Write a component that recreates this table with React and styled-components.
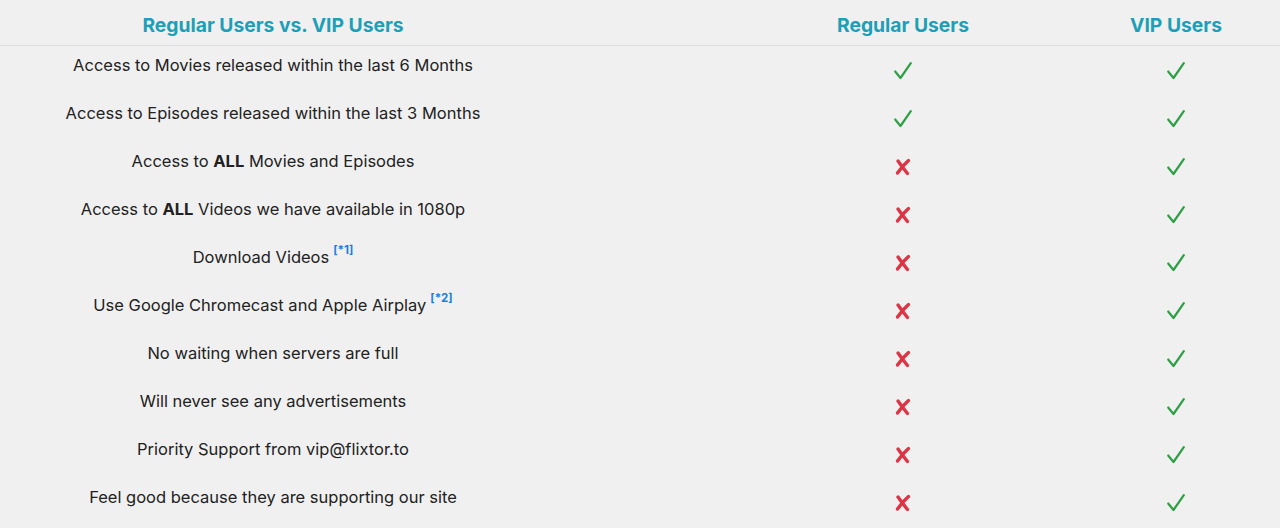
import React from "react";
import styled, { createGlobalStyle } from "styled-components";

const GlobalStyle = createGlobalStyle`
  html, body {
    margin: 0;
    padding: 0;
    background: #f0f0f0;
  }
  body {
    font-family: Inter, "Noto Sans", "Liberation Sans", sans-serif;
    color: #222;
  }
`;

const Table = styled.div`
  width: 1280px;
  height: 528px;
  background: #f0f0f0;
  overflow: hidden;
`;

const Row = styled.div`
  display: grid;
  grid-template-columns: 546px 1fr 208px;
  height: ${(p) => (p.$head ? "45px" : "48px")};
  align-items: start;
  border-bottom: ${(p) => (p.$head ? "1px solid #dddddd" : "none")};
`;

const Cell = styled.div`
  text-align: center;
  padding-left: ${(p) => (p.$mid ? "188px" : "0")};
  padding-top: ${(p) => (p.$head ? "13px" : p.$icon ? "16px" : "9px")};
  font-size: 16.5px;
  line-height: 20px;
  display: flex;
  justify-content: center;
`;

const HeadText = styled.span`
  color: #1c9fb7;
  font-size: 19.3px;
  line-height: 24px;
  font-weight: 700;
`;

const Note = styled.sup`
  color: #1a7fe0;
  font-size: 11.5px;
  font-weight: 700;
  line-height: 0;
  margin-left: 4px;
  vertical-align: 0;
  position: relative;
  top: -9px;
`;

const Check = () => (
  <svg width="18" height="18" viewBox="0 0 18 18">
    <path
      d="M1.2 9.5 L6.5 16 L16.8 1.2"
      fill="none"
      stroke="#2ea043"
      strokeWidth="2.2"
      strokeLinecap="round"
      strokeLinejoin="round"
    />
  </svg>
);

const Cross = () => (
  <svg width="16" height="18" viewBox="0 0 16 18">
    <path
      d="M3 3 C6 7 8.5 10.5 12.5 15.5"
      fill="none"
      stroke="#dc3545"
      strokeWidth="3.4"
      strokeLinecap="round"
    />
    <path
      d="M13.5 2.5 C9.5 6 6 10 2.5 15"
      fill="none"
      stroke="#dc3545"
      strokeWidth="3.4"
      strokeLinecap="round"
    />
  </svg>
);

const features = [
  { text: <>Access to Movies released within the last 6 Months</>, regular: true },
  { text: <>Access to Episodes released within the last 3 Months</>, regular: true },
  { text: <>Access to <b>ALL</b> Movies and Episodes</> },
  { text: <>Access to <b>ALL</b> Videos we have available in 1080p</> },
  { text: <>Download Videos<Note>[*1]</Note></> },
  { text: <>Use Google Chromecast and Apple Airplay<Note>[*2]</Note></> },
  { text: <>No waiting when servers are full</> },
  { text: <>Will never see any advertisements</> },
  { text: <>Priority Support from vip@flixtor.to</> },
  { text: <>Feel good because they are supporting our site</> },
];

export default function App() {
  return (
    <>
      <GlobalStyle />
      <Table>
        <Row $head>
          <Cell $head>
            <HeadText>Regular Users vs. VIP Users</HeadText>
          </Cell>
          <Cell $head $mid>
            <HeadText>Regular Users</HeadText>
          </Cell>
          <Cell $head>
            <HeadText>VIP Users</HeadText>
          </Cell>
        </Row>
        {features.map((f, i) => (
          <Row key={i}>
            <Cell>
              <span>{f.text}</span>
            </Cell>
            <Cell $mid $icon>
              {f.regular ? <Check /> : <Cross />}
            </Cell>
            <Cell $icon>
              <Check />
            </Cell>
          </Row>
        ))}
      </Table>
    </>
  );
}
